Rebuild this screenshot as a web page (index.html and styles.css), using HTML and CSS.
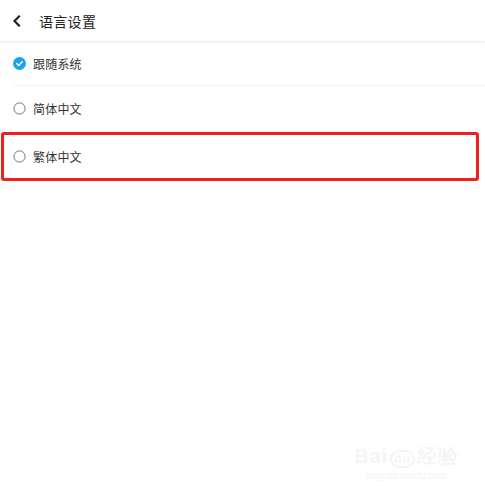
FILE: index.html
```html
<!DOCTYPE html>
<html lang="zh">
<head>
<meta charset="utf-8">
<link rel="stylesheet" href="styles.css">
</head>
<body>
<div class="page">
  <header class="header">
    <svg class="back" width="10" height="12" viewBox="0 0 10 12"><path d="M7 1.5 L2.5 6 L7 10.5" fill="none" stroke="#222" stroke-width="2.2" stroke-linecap="square" stroke-linejoin="miter"/></svg>
    <span class="title">语言设置</span>
  </header>
  <div class="list">
    <div class="row row-sep">
      <svg class="icon" width="13" height="13" viewBox="0 0 13 13"><circle cx="6.5" cy="6.5" r="6.5" fill="#1aa3f5"/><path d="M3.8 6.6 L5.7 8.4 L9.2 4.8" fill="none" stroke="#fff" stroke-width="1.5" stroke-linecap="round" stroke-linejoin="round"/></svg>
      <span class="label">跟随系统</span>
    </div>
    <div class="row">
      <svg class="icon" width="13" height="13" viewBox="0 0 13 13"><circle cx="6.5" cy="6.5" r="5.6" fill="none" stroke="#777" stroke-width="1"/></svg>
      <span class="label">简体中文</span>
    </div>
    <div class="row row-marked">
      <svg class="icon" width="13" height="13" viewBox="0 0 13 13"><circle cx="6.5" cy="6.5" r="5.6" fill="none" stroke="#777" stroke-width="1"/></svg>
      <span class="label">繁体中文</span>
    </div>
  </div>
  <div class="watermark">
    <div class="wm-logo">Bai<span class="wm-du">du</span>经验</div>
    <div class="wm-url">jingyan.baidu.com</div>
  </div>
</div>
</body>
</html>
```
FILE: styles.css
```css
* { box-sizing: border-box; }
html, body { margin: 0; padding: 0; background: #fff; }
body { font-family: "Noto Sans CJK SC", "Noto Sans", sans-serif; color: #222; }
.page { width: 485px; height: 495px; position: relative; overflow: hidden; }
.header {
  height: 42px;
  display: flex;
  align-items: center;
  padding-left: 12px;
  border-bottom: 1px solid #eeeeee;
  box-shadow: 0 1px 2px rgba(0,0,0,0.04);
}
.back { display: block; margin-right: 17px; }
.title { font-size: 14px; color: #222; letter-spacing: 0.3px; }
.list { display: flex; flex-direction: column; }
.row {
  height: 45px;
  display: flex;
  align-items: center;
  padding-left: 13px;
}
.row-sep { height: 44px; border-bottom: 1px solid #f4f4f4; margin-left: 13px; padding-left: 0; }
.icon { display: block; margin-right: 7px; }
.label { font-size: 12px; color: #333; letter-spacing: 0.2px; }
.row-marked {
  margin: 1px 6px 0 1px;
  height: 49px;
  border: 3px solid #f21e1a;
  border-radius: 3px;
  padding-left: 9px;
}
.watermark {
  position: absolute;
  right: 26px;
  bottom: 14px;
  text-align: center;
  color: #f5f5f5;
  font-family: "Liberation Sans", sans-serif;
}
.wm-logo { font-size: 20px; font-weight: bold; letter-spacing: 1px; }
.wm-du { font-size: 12px; border: 2px solid #f3f3f3; border-radius: 10px; padding: 0 2px; margin: 0 2px; }
.wm-url { font-size: 10px; font-style: italic; }
```
